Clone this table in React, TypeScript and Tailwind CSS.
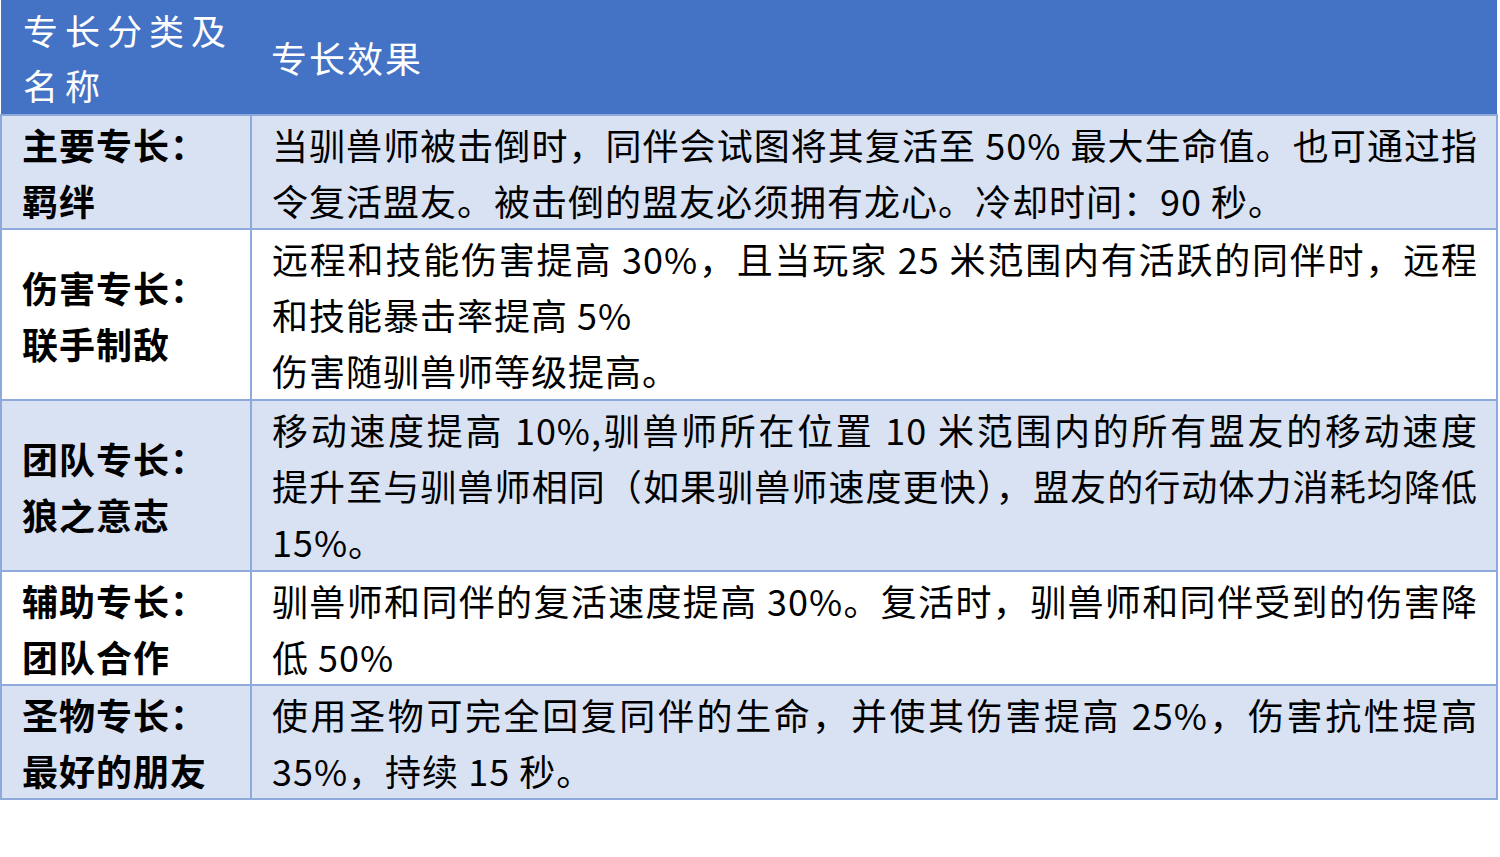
import React from 'react';

type Row = {
  label: string[];
  lines: { text: string; full?: boolean }[];
  shaded: boolean;
  h: string;
};

const rows: Row[] = [
  {
    label: ['主要专长：', '羁绊'],
    shaded: true,
    h: 'h-[114px]',
    lines: [
      { text: '当驯兽师被击倒时，同伴会试图将其复活至 50% 最大生命值。也可通过指', full: true },
      { text: '令复活盟友。被击倒的盟友必须拥有龙心。冷却时间：90 秒。' },
    ],
  },
  {
    label: ['伤害专长：', '联手制敌'],
    shaded: false,
    h: 'h-[171px]',
    lines: [
      { text: '远程和技能伤害提高 30%，且当玩家 25 米范围内有活跃的同伴时，远程', full: true },
      { text: '和技能暴击率提高 5%' },
      { text: '伤害随驯兽师等级提高。' },
    ],
  },
  {
    label: ['团队专长：', '狼之意志'],
    shaded: true,
    h: 'h-[171px]',
    lines: [
      { text: '移动速度提高 10%,驯兽师所在位置 10 米范围内的所有盟友的移动速度', full: true },
      { text: '提升至与驯兽师相同（如果驯兽师速度更快），盟友的行动体力消耗均降低', full: true },
      { text: '15%。' },
    ],
  },
  {
    label: ['辅助专长：', '团队合作'],
    shaded: false,
    h: 'h-[114px]',
    lines: [
      { text: '驯兽师和同伴的复活速度提高 30%。复活时，驯兽师和同伴受到的伤害降', full: true },
      { text: '低 50%' },
    ],
  },
  {
    label: ['圣物专长：', '最好的朋友'],
    shaded: true,
    h: 'h-[114px]',
    lines: [
      { text: '使用圣物可完全回复同伴的生命，并使其伤害提高 25%，伤害抗性提高', full: true },
      { text: '35%，持续 15 秒。' },
    ],
  },
];

export default function App() {
  return (
    <div className="h-[857px] w-[1500px] bg-white font-['Noto_Sans_CJK_SC',sans-serif] text-black">
      <table className="w-[1498px] table-fixed border-collapse">
        <colgroup>
          <col className="w-[250px]" />
          <col />
        </colgroup>
        <thead>
          <tr className="h-[115px] bg-[#4472C4] text-white">
            <th className="whitespace-nowrap pl-[22px] pr-0 text-left align-middle text-[35px] font-normal leading-[55px] tracking-[7px]">
              <div>专长分类及</div>
              <div>名称</div>
            </th>
            <th className="pl-[20px] text-left align-middle text-[36px] font-normal leading-[55px] tracking-[2px]">
              专长效果
            </th>
          </tr>
        </thead>
        <tbody>
          {rows.map((row) => (
            <tr key={row.label[0]} className={`${row.h} ${row.shaded ? 'bg-[#D9E2F3]' : 'bg-white'}`}>
              <td className="border-2 border-[#8EAADB] px-[20px] align-middle text-[36px] font-bold leading-[56px] tracking-[1px]">
                {row.label.map((l) => (
                  <div key={l} className="whitespace-nowrap">{l}</div>
                ))}
              </td>
              <td className="border-2 border-[#8EAADB] pl-[20px] pr-[18px] align-top text-[36px] leading-[56px] tracking-[1px]">
                {row.lines.map((ln) => (
                  <div
                    key={ln.text}
                    className={
                      ln.full
                        ? 'whitespace-nowrap text-justify [text-align-last:justify]'
                        : 'whitespace-nowrap'
                    }
                  >
                    {ln.text}
                  </div>
                ))}
              </td>
            </tr>
          ))}
        </tbody>
      </table>
    </div>
  );
}
